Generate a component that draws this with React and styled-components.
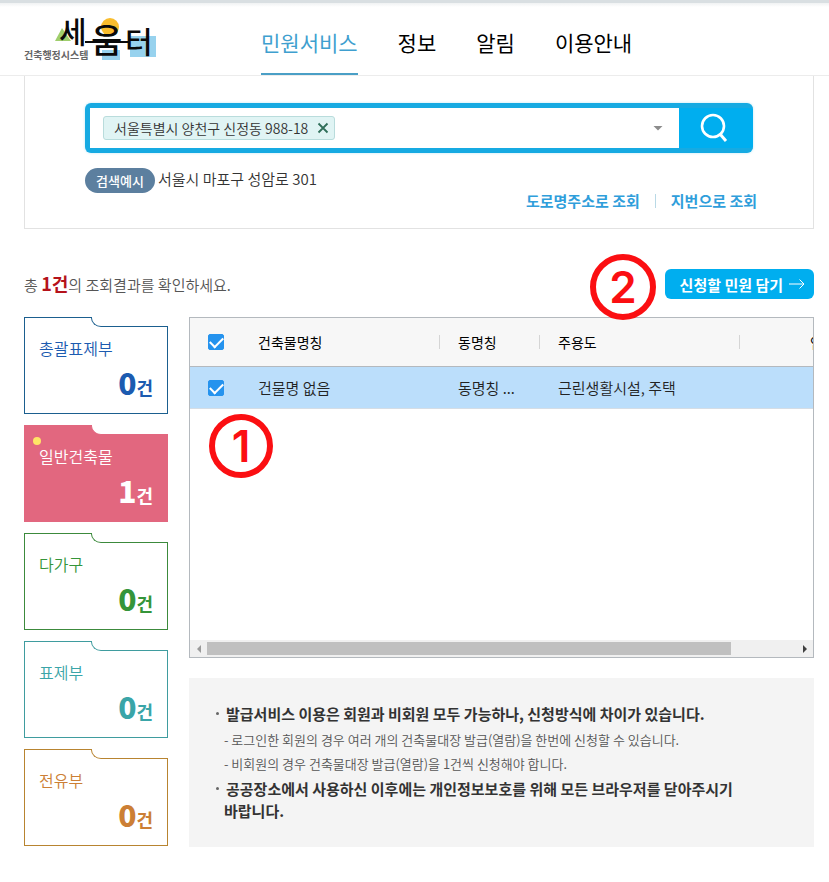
import React from "react";
import styled, { createGlobalStyle } from "styled-components";

const GlobalStyle = createGlobalStyle`
  * {
    box-sizing: border-box;
  }

  body {
    margin: 0;
    background: #fff;
    color: #333;
    font-family: "Noto Sans CJK KR", "Noto Sans", sans-serif;
    font-size: 15px;
    font-weight: 350;
    line-height: 22px;
  }

  button,
  input {
    font-family: inherit;
    font-weight: inherit;
  }
`;

const Header = styled.header`
  display: flex;
  align-items: stretch;
  height: 76px;
  padding-left: 24px;
  border-top: 3px solid #d9dfe2;
  border-bottom: 1px solid #ececec;
  background: linear-gradient(#f0f2f3, #fff 4px);
`;

const LogoLink = styled.a`
  display: block;
  width: 134px;
  height: 72px;
`;

const Nav = styled.nav`
  display: flex;
  gap: 40px;
  margin-left: 103px;
`;

const NavLink = styled.a`
  display: flex;
  align-items: center;
  padding: 9px 0 2px;
  border-bottom: 2px solid ${(props) => (props.$active ? "#4a9fc6" : "transparent")};
  color: ${(props) => (props.$active ? "#3f9fcf" : "#000")};
  font-size: 21px;
  font-weight: 400;
  text-decoration: none;
`;

const Page = styled.main`
  padding: 0 15px 35px 24px;
`;

const SearchPanel = styled.section`
  min-height: 153px;
  padding: 27px 56px 16px 60px;
  border: 1px solid #e2e2e2;
  border-top: none;
`;

const SearchForm = styled.form`
  display: flex;
  height: 50px;
  margin-right: 4px;
  border: 5px solid #16aae2;
  border-right: none;
  border-radius: 6px;
  background: #00aeef;
  box-shadow: 0 0 3px #bfe9f7;
`;

const SearchField = styled.div`
  display: flex;
  flex: 1;
  align-items: center;
  min-width: 0;
  padding: 0 16px 0 13px;
  background: #fff;
`;

const Chip = styled.span`
  display: flex;
  align-items: center;
  gap: 9px;
  height: 24px;
  padding: 0 5px 0 10px;
  border: 1px solid #b9dcdc;
  border-radius: 3px;
  background: #e0f4f4;
  font-size: 14px;
  white-space: nowrap;
`;

const ChipRemove = styled.button`
  display: flex;
  padding: 0;
  border: none;
  background: none;
  cursor: pointer;
`;

const SearchInput = styled.input`
  flex: 1;
  min-width: 0;
  border: none;
  outline: none;
  font-size: 14px;
`;

const CaretButton = styled.button`
  width: 10px;
  height: 5px;
  padding: 0;
  border: none;
  background: #8c8c8c;
  clip-path: polygon(0 0, 100% 0, 50% 100%);
  cursor: pointer;
`;

const SearchButton = styled.button`
  display: flex;
  align-items: center;
  justify-content: center;
  width: 74px;
  padding: 0 4px 0 0;
  border: none;
  background: none;
  cursor: pointer;
`;

const SearchFooter = styled.div`
  display: flex;
  justify-content: space-between;
  margin-top: 15px;
`;

const Example = styled.p`
  display: flex;
  gap: 3px;
  margin: 0;
`;

const ExampleLabel = styled.span`
  width: 70px;
  height: 25px;
  border-radius: 13px;
  background: #5c7f9f;
  color: #fff;
  font-size: 13px;
  font-weight: 500;
  line-height: 25px;
  text-align: center;
`;

const LookupLinks = styled.div`
  display: flex;
  align-items: center;
  height: 22px;
  margin-top: 22px;
`;

const LookupLink = styled.a`
  color: #2f9edb;
  font-weight: 700;
  text-decoration: none;

  & + & {
    margin-left: 15px;
    padding-left: 16px;
    background: linear-gradient(#b9d9e6, #b9d9e6) left center / 1px 14px no-repeat;
  }
`;

const ResultBar = styled.div`
  position: relative;
  display: flex;
  align-items: center;
  justify-content: space-between;
  margin: 40px 0 18px;
`;

const ResultText = styled.p`
  margin: 0;
  color: #555;

  strong {
    color: #b5121b;
    font-size: 18px;
    font-weight: 700;
  }
`;

const ApplyButton = styled.button`
  display: flex;
  align-items: center;
  gap: 6px;
  height: 30px;
  padding: 0 9px 0 15px;
  border: none;
  border-radius: 6px;
  background: #00aeef;
  color: #fff;
  font-size: 15px;
  font-weight: 700;
  cursor: pointer;
`;

const StepBadge = styled.span`
  position: absolute;
  top: ${(props) => props.$top}px;
  ${(props) => props.$side}: ${(props) => props.$offset}px;
  display: flex;
  align-items: center;
  justify-content: center;
  width: ${(props) => props.$size}px;
  height: ${(props) => props.$size}px;
  border: 6px solid #fb0f12;
  border-radius: 50%;
  color: #fb0f12;
  font-family: Inter, sans-serif;
  font-size: 44px;
  font-weight: 600;
  z-index: 1;
`;

const ResultBody = styled.div`
  display: flex;
  align-items: flex-start;
  gap: 21px;
`;

const Folders = styled.div`
  display: flex;
  flex: none;
  flex-direction: column;
  gap: 11px;
  width: 144px;
`;

const Folder = styled.button`
  position: relative;
  display: flex;
  flex-direction: column;
  justify-content: space-between;
  height: 97px;
  padding: 19px 14px 10px;
  border: 1px solid ${(props) => props.$line};
  background: ${(props) => (props.$active ? props.$line : "#fff")};
  color: ${(props) => props.$color};
  text-align: left;
  cursor: pointer;

  /* notch beside the folder tab */
  &::before {
    content: "";
    position: absolute;
    top: -1px;
    right: -1px;
    width: 76px;
    height: 9px;
    border-bottom: 1px solid ${(props) => props.$line};
    border-left: 1px solid ${(props) => props.$line};
    border-bottom-left-radius: 10px 9px;
    background: #fff;
  }
`;

const FolderDot = styled.span`
  position: absolute;
  top: 11px;
  left: 8px;
  width: 8px;
  height: 8px;
  border-radius: 50%;
  background: #ffe566;
`;

const FolderName = styled.span`
  font-size: 16px;
  line-height: 22px;
`;

const FolderCount = styled.span`
  align-self: flex-end;
  font-size: 18px;
  font-weight: 700;
  line-height: 32px;

  strong {
    font-size: 30px;
  }
`;

const Main = styled.div`
  position: relative;
  flex: 1;
  min-width: 0;
`;

const Grid = styled.div`
  display: flex;
  flex-direction: column;
  height: 341px;
  border: 1px solid #b4b9be;
`;

const GridView = styled.div`
  flex: 1;
  overflow: hidden;
`;

const Table = styled.table`
  width: 701px;
  border-collapse: separate;
  border-spacing: 0;
  table-layout: fixed;
`;

const Col = styled.col`
  width: ${(props) => props.$width}px;
`;

const HeadCell = styled.th`
  height: 49px;
  padding: 0 0 0 ${(props) => props.$indent || 18}px;
  border-bottom: 1px solid #b4b9be;
  background: ${(props) =>
    props.$divided
      ? "linear-gradient(#d5d5d5, #d5d5d5) right center / 1px 14px no-repeat #f7f7f7"
      : "#f7f7f7"};
  color: #000;
  font-size: 14px;
  font-weight: 400;
  text-align: left;
  white-space: nowrap;
`;

const Cell = styled.td`
  height: 42px;
  padding: 0 0 0 18px;
  border-bottom: 1px solid #d5dde5;
  background: #bbdefb;
  color: #222;
  font-size: 15px;
  white-space: nowrap;
`;

const Checkbox = styled.input.attrs({ type: "checkbox" })`
  display: block;
  width: 16px;
  height: 16px;
  margin: 0;
  appearance: none;
  border: 1px solid #2593ee;
  border-radius: 2px;
  background: #fff;

  &:checked {
    background: #2593ee;
  }

  &:checked::after {
    content: "";
    display: block;
    width: 11px;
    height: 6px;
    margin: 3px 0 0 1px;
    border: solid #fff;
    border-width: 0 0 2px 2px;
    transform: translateY(-1px) rotate(-45deg);
  }
`;

const ScrollBar = styled.div`
  display: flex;
  align-items: center;
  height: 17px;
  background: #f0f0f0;
`;

const ScrollArrow = styled.button`
  display: flex;
  align-items: center;
  justify-content: center;
  width: 17px;
  height: 17px;
  padding: 0;
  border: none;
  background: none;
  color: ${(props) => (props.disabled ? "#9a9a9a" : "#404040")};
`;

const ScrollTrack = styled.div`
  flex: 1;
`;

const ScrollThumb = styled.div`
  width: 89%;
  height: 13px;
  background: #c0c0c0;
`;

const Notice = styled.ul`
  margin: 20px 0 0;
  padding: 25px 35px;
  background: #f4f4f4;
  list-style: none;
  word-break: keep-all;
`;

const NoticeItem = styled.li`
  color: #333;
  font-weight: 700;
  text-indent: -8px;

  &::before {
    content: "";
    display: inline-block;
    width: 3px;
    height: 3px;
    margin: 0 7px 5px 0;
    border-radius: 50%;
    background: #666;
  }
`;

const NoticeDetails = styled.ul`
  margin: 3px 0 2px;
  padding: 0;
  color: #555;
  font-size: 13px;
  font-weight: 350;
  line-height: 24px;
  list-style: none;
  text-indent: 0;
`;

const folders = [
  { name: "총괄표제부", count: 0, line: "#1b5f8f", color: "#1c5bb0" },
  { name: "일반건축물", count: 1, line: "#e2677f", color: "#fff", active: true },
  { name: "다가구", count: 0, line: "#3c8a3c", color: "#35953a" },
  { name: "표제부", count: 0, line: "#3f9c9f", color: "#3aa5a8" },
  { name: "전유부", count: 0, line: "#b88430", color: "#cc7f35" },
];

function Logo() {
  return (
    <svg width="134" height="72" viewBox="0 0 134 72" role="img" aria-label="세움터">
      <path d="M31 38 L38 25 L47 38 Z" fill="#9fce6c" />
      <circle cx="86" cy="24" r="9" fill="#f9bd2d" />
      <rect x="78" y="47" width="18" height="10" fill="#97d2ee" />
      <rect x="106" y="33" width="26" height="21" fill="#97d2ee" />
      <g fill="#0a0a0a" fontWeight="500">
        <text x="35" y="40" fontSize="30">세</text>
        <text x="67" y="50" fontSize="34">움</text>
        <text x="101" y="50" fontSize="30">터</text>
      </g>
      <path d="M61 39 H105" stroke="#0a0a0a" strokeWidth="2" />
      <text x="0" y="56" fontSize="10" fontWeight="700" fill="#666">
        건축행정시스템
      </text>
    </svg>
  );
}

function App() {
  const [checked, setChecked] = React.useState(true);
  const [keyword, setKeyword] = React.useState("");
  const toggle = () => setChecked(!checked);

  return (
    <>
      <GlobalStyle />
      <Header>
        <LogoLink href="#">
          <Logo />
        </LogoLink>
        <Nav>
          <NavLink href="#service" $active>
            민원서비스
          </NavLink>
          <NavLink href="#info">정보</NavLink>
          <NavLink href="#notice">알림</NavLink>
          <NavLink href="#guide">이용안내</NavLink>
        </Nav>
      </Header>
      <Page>
        <SearchPanel>
          <SearchForm onSubmit={(e) => e.preventDefault()}>
            <SearchField>
              <Chip>
                서울특별시 양천구 신정동 988-18
                <ChipRemove type="button" aria-label="삭제">
                  <svg width="12" height="12" viewBox="0 0 12 12">
                    <path d="M1.5 1.5 L10.5 10.5 M10.5 1.5 L1.5 10.5" stroke="#2f6f5a" strokeWidth="1.8" />
                  </svg>
                </ChipRemove>
              </Chip>
              <SearchInput
                aria-label="주소"
                value={keyword}
                onChange={(e) => setKeyword(e.target.value)}
              />
              <CaretButton type="button" aria-label="목록 열기" />
            </SearchField>
            <SearchButton aria-label="검색">
              <svg width="28" height="30" viewBox="0 0 28 30" fill="none" stroke="#fff">
                <circle cx="13" cy="13" r="11" strokeWidth="2.6" />
                <path d="M20 21 L26 28" strokeWidth="3" />
              </svg>
            </SearchButton>
          </SearchForm>
          <SearchFooter>
            <Example>
              <ExampleLabel>검색예시</ExampleLabel>
              서울시 마포구 성암로 301
            </Example>
            <LookupLinks>
              <LookupLink href="#road">도로명주소로 조회</LookupLink>
              <LookupLink href="#lot">지번으로 조회</LookupLink>
            </LookupLinks>
          </SearchFooter>
        </SearchPanel>

        <ResultBar>
          <ResultText>
            총 <strong>1건</strong>의 조회결과를 확인하세요.
          </ResultText>
          <StepBadge $top={-15} $side="right" $offset={158} $size={66}>
            2
          </StepBadge>
          <ApplyButton>
            신청할 민원 담기
            <svg width="16" height="10" viewBox="0 0 16 10" fill="none" stroke="#fff">
              <path d="M0 5 H15 M10.5 0.5 L15 5 L10.5 9.5" />
            </svg>
          </ApplyButton>
        </ResultBar>

        <ResultBody>
          <Folders>
            {folders.map((folder) => (
              <Folder
                key={folder.name}
                $line={folder.line}
                $color={folder.color}
                $active={folder.active}
              >
                {folder.active && <FolderDot />}
                <FolderName>{folder.name}</FolderName>
                <FolderCount>
                  <strong>{folder.count}</strong>건
                </FolderCount>
              </Folder>
            ))}
          </Folders>
          <Main>
            <Grid>
              <GridView>
                <Table>
                  <colgroup>
                    <Col $width={50} />
                    <Col $width={200} />
                    <Col $width={100} />
                    <Col $width={200} />
                    <Col $width={151} />
                  </colgroup>
                  <thead>
                    <tr>
                      <HeadCell>
                        <Checkbox aria-label="전체 선택" checked={checked} onChange={toggle} />
                      </HeadCell>
                      <HeadCell $divided>건축물명칭</HeadCell>
                      <HeadCell $divided>동명칭</HeadCell>
                      <HeadCell $divided>주용도</HeadCell>
                      <HeadCell $indent={70}>연면적</HeadCell>
                    </tr>
                  </thead>
                  <tbody>
                    <tr>
                      <Cell>
                        <Checkbox aria-label="건물 선택" checked={checked} onChange={toggle} />
                      </Cell>
                      <Cell>건물명 없음</Cell>
                      <Cell>동명칭 ...</Cell>
                      <Cell>근린생활시설, 주택</Cell>
                      <Cell />
                    </tr>
                  </tbody>
                </Table>
              </GridView>
              <ScrollBar>
                <ScrollArrow aria-label="왼쪽" disabled>
                  <svg width="4" height="8" viewBox="0 0 4 8">
                    <path d="M4 0 V8 L0 4 Z" fill="currentColor" />
                  </svg>
                </ScrollArrow>
                <ScrollTrack>
                  <ScrollThumb />
                </ScrollTrack>
                <ScrollArrow aria-label="오른쪽">
                  <svg width="4" height="8" viewBox="0 0 4 8">
                    <path d="M0 0 V8 L4 4 Z" fill="currentColor" />
                  </svg>
                </ScrollArrow>
              </ScrollBar>
            </Grid>
            <StepBadge $top={97} $side="left" $offset={20} $size={64}>
              1
            </StepBadge>
            <Notice>
              <NoticeItem>
                발급서비스 이용은 회원과 비회원 모두 가능하나, 신청방식에 차이가 있습니다.
                <NoticeDetails>
                  <li>- 로그인한 회원의 경우 여러 개의 건축물대장 발급(열람)을 한번에 신청할 수 있습니다.</li>
                  <li>- 비회원의 경우 건축물대장 발급(열람)을 1건씩 신청해야 합니다.</li>
                </NoticeDetails>
              </NoticeItem>
              <NoticeItem>
                공공장소에서 사용하신 이후에는 개인정보보호를 위해 모든 브라우저를 닫아주시기 바랍니다.
              </NoticeItem>
            </Notice>
          </Main>
        </ResultBody>
      </Page>
    </>
  );
}

export default App;
